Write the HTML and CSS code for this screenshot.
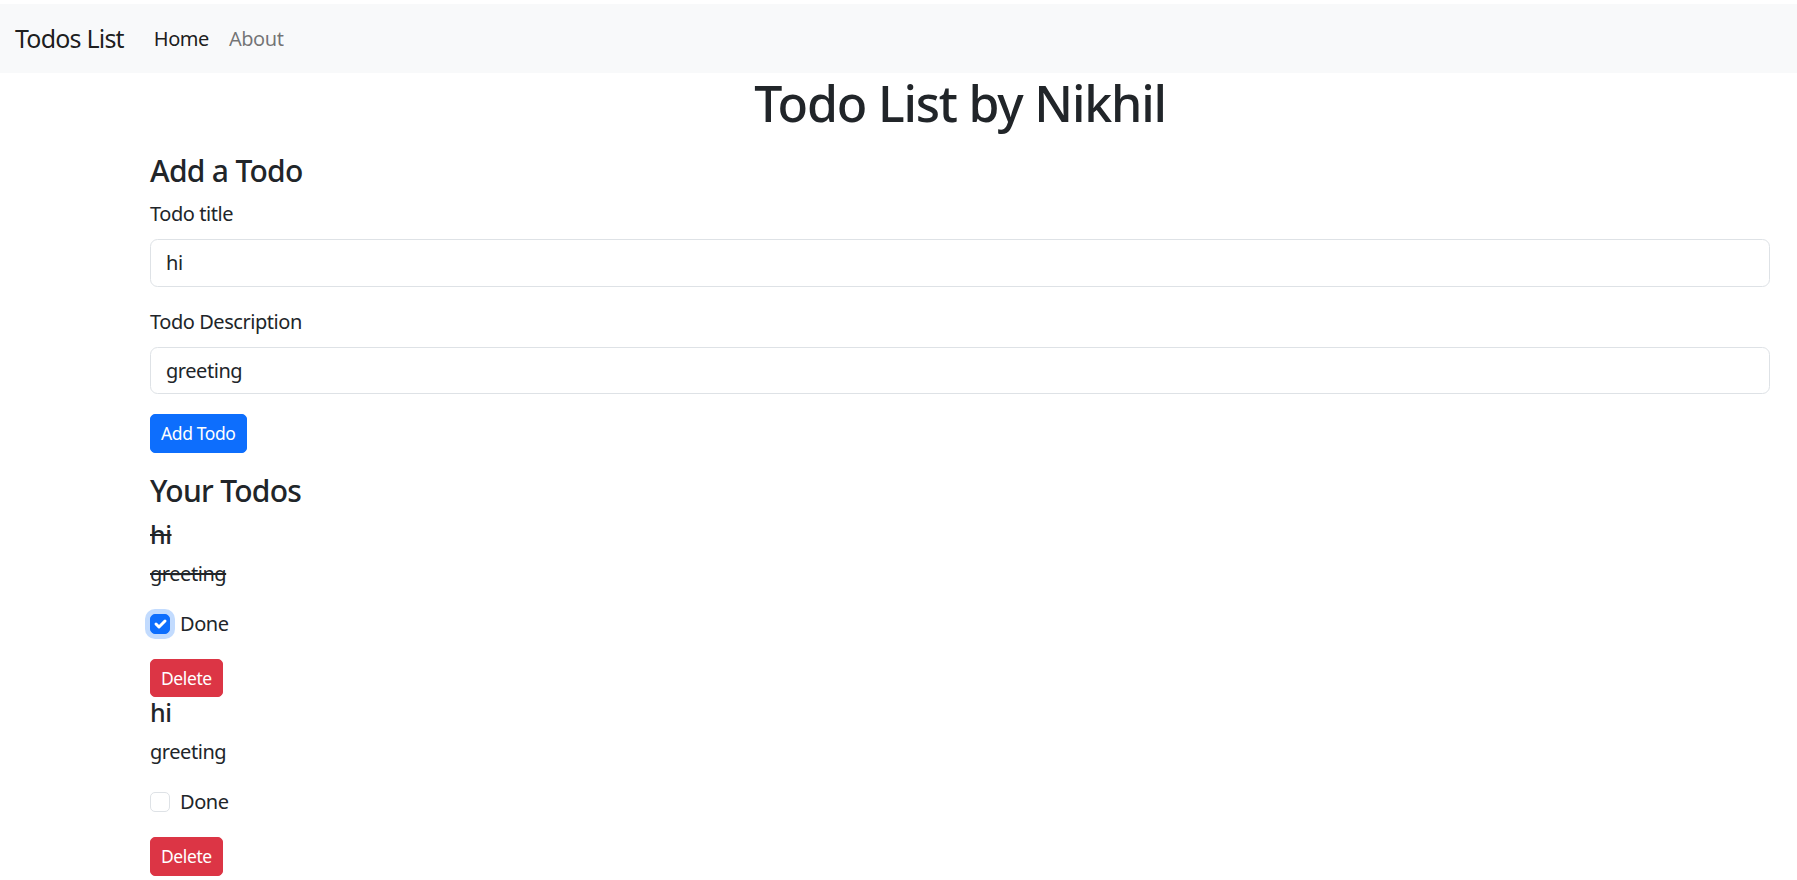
FILE: index.html
```html
<!DOCTYPE html>
<html lang="en">
<head>
<meta charset="utf-8">
<title>Todos List</title>
<link rel="stylesheet" href="styles.css">
</head>
<body>
<nav class="navbar">
  <a class="brand" href="#">Todos List</a>
  <ul class="nav-links">
    <li><a class="nav-link active" href="#">Home</a></li>
    <li><a class="nav-link" href="#">About</a></li>
  </ul>
</nav>
<div class="page">
  <h1 class="title">Todo List by Nikhil</h1>
  <div class="section">
    <h3 class="heading">Add a Todo</h3>
    <form class="add-form">
      <div class="field">
        <label class="label" for="title">Todo title</label>
        <input class="control" id="title" type="text" value="hi">
      </div>
      <div class="field">
        <label class="label" for="desc">Todo Description</label>
        <input class="control" id="desc" type="text" value="greeting">
      </div>
      <button type="button" class="btn btn-primary">Add Todo</button>
    </form>
  </div>
  <div class="section">
    <h3 class="heading">Your Todos</h3>
    <div class="todo done">
      <h5 class="todo-title">hi</h5>
      <p class="todo-desc">greeting</p>
      <div class="check">
        <span class="box checked"><svg viewBox="0 0 20 20" width="20" height="20"><path d="M6 10l3 3l6-6" fill="none" stroke="#fff" stroke-width="3" stroke-linecap="round" stroke-linejoin="round"/></svg></span>
        <span class="check-label">Done</span>
      </div>
      <button type="button" class="btn btn-danger">Delete</button>
    </div>
    <div class="todo">
      <h5 class="todo-title">hi</h5>
      <p class="todo-desc">greeting</p>
      <div class="check">
        <span class="box"></span>
        <span class="check-label">Done</span>
      </div>
      <button type="button" class="btn btn-danger">Delete</button>
    </div>
  </div>
</div>
</body>
</html>
```
FILE: styles.css
```css
* { box-sizing: border-box; }
html, body { margin: 0; padding: 0; }
body {
  font-family: "Noto Sans", "Open Sans", sans-serif;
  font-size: 20px;
  line-height: 30px;
  letter-spacing: -0.45px;
  color: #212529;
  background: #fff;
  padding-top: 4px;
}
.navbar {
  display: flex;
  align-items: center;
  height: 69px;
  background: #f8f9fa;
  padding: 0 15px;
}
.brand {
  font-size: 25px;
  line-height: 37px;
  letter-spacing: -0.8px;
  color: rgba(0,0,0,.9);
  text-decoration: none;
  margin-right: 20px;
}
.nav-links { display: flex; list-style: none; margin: 0; padding: 0; }
.nav-link {
  display: block;
  padding: 0 10px;
  font-size: 20px;
  color: rgba(0,0,0,.55);
  text-decoration: none;
}
.nav-link.active { color: rgba(0,0,0,.9); }
.page { padding: 0 27px 0 150px; }
.title {
  margin: 0 0 10px;
  text-align: center;
  font-size: 50px;
  line-height: 60px;
  font-weight: 500;
  letter-spacing: -1.2px;
}
.section { margin: 20px 0; }
.heading {
  margin: 0 0 10px;
  font-size: 30px;
  line-height: 36px;
  font-weight: 500;
  letter-spacing: -0.7px;
}
.field { margin-bottom: 20px; }
.label { display: block; margin-bottom: 10px; }
.control {
  display: block;
  width: 100%;
  height: 47.5px;
  padding: 0 15px;
  font: inherit;
  letter-spacing: inherit;
  color: #212529;
  border: 1px solid #dee2e6;
  border-radius: 7.5px;
  background: #fff;
}
.btn {
  display: inline-block;
  height: 38.5px;
  padding: 0 10px;
  font-family: inherit;
  font-size: 17.5px;
  line-height: 36.5px;
  letter-spacing: -0.4px;
  color: #fff;
  border: 1px solid transparent;
  border-radius: 5px;
  cursor: pointer;
  vertical-align: top;
}
.btn-primary { background: #0d6efd; border-color: #0d6efd; }
.btn-danger { background: #dc3545; border-color: #dc3545; }
.todo-title {
  margin: 0 0 10px;
  font-size: 25px;
  line-height: 30px;
  font-weight: 500;
}
.todo-desc { margin: 0 0 20px; }
.done .todo-title, .done .todo-desc { text-decoration: line-through; }
.check {
  display: flex;
  align-items: center;
  height: 30px;
  margin-bottom: 20px;
}
.box {
  width: 20px;
  height: 20px;
  border: 1px solid #dee2e6;
  border-radius: 5px;
  background: #fff;
  margin-right: 10px;
  display: flex;
}
.box svg { display: block; margin: -1px; }
.box.checked {
  background: #0d6efd;
  border-color: #0d6efd;
  box-shadow: 0 0 0 5px rgba(13,110,253,.25);
}
```
